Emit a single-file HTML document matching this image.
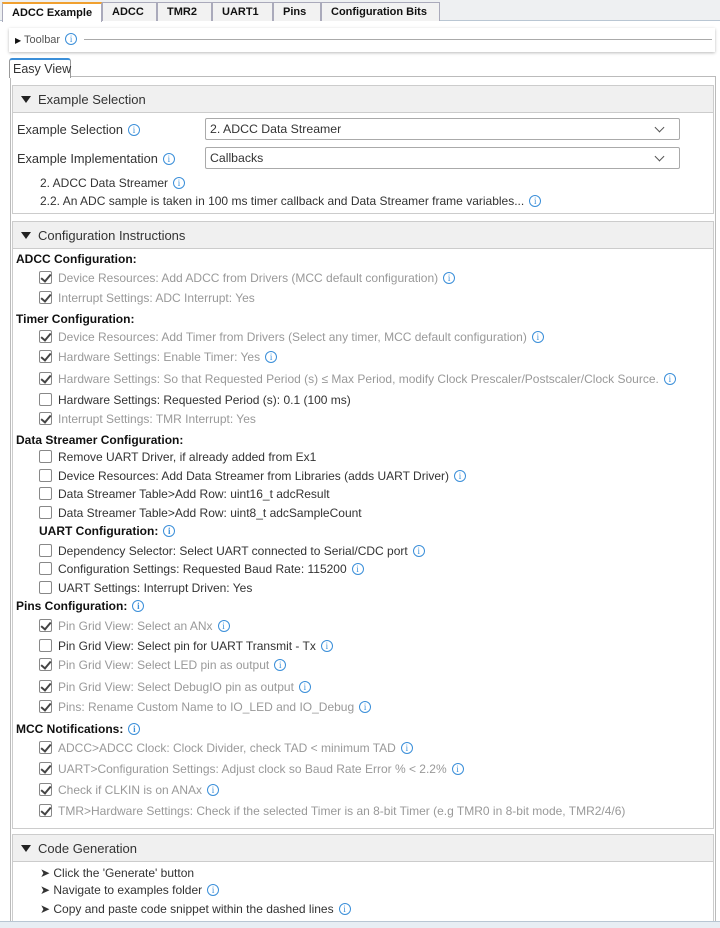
<!DOCTYPE html>
<html><head><meta charset="utf-8"><style>
*{box-sizing:border-box;margin:0;padding:0}
body{width:720px;height:928px;background:#fff;font-family:"Liberation Sans",sans-serif;font-size:12px;color:#333;position:relative;overflow:hidden}
.a{position:absolute;white-space:nowrap}
.tabbar{position:absolute;left:0;top:0;width:720px;height:21px;background:#eef0f2;border-bottom:1px solid #b9c6d3}
.tab{position:absolute;top:2px;height:19px;border:1px solid #aab;border-bottom:none;background:#f2f2f2;font-weight:bold;font-size:11px;line-height:18px;padding-left:9px;color:#111}
.sel{background:#fff;border-top:2px solid #f0a030;height:20px}
.i{display:inline-block;width:12px;height:12px;border:1px solid #3b8fd9;border-radius:50%;color:#3b8fd9;font-size:9px;line-height:10px;text-align:center;font-family:"Liberation Serif",serif;vertical-align:1px;margin-left:5px}
.box{position:absolute;left:12px;width:702px;border:1px solid #ccc;background:#fff}
.hd{position:absolute;left:0;top:0;width:100%;height:27px;background:#f0f0f0;border-bottom:1px solid #ccc;font-size:13px;line-height:27px;padding-left:25px;color:#333}
.hd:before{content:"";position:absolute;left:8px;top:10px;border-left:5px solid transparent;border-right:5px solid transparent;border-top:7px solid #222}
.r{position:absolute;height:16px;line-height:16px;white-space:nowrap;font-size:12px}
.h{font-weight:bold;color:#111}
.g{color:#999}
.d{color:#333}
.cb{display:inline-block;width:13px;height:13px;border:1px solid #888;border-radius:2px;vertical-align:-2px;margin-right:6px;position:relative;background:#fff}
.ck:after{content:"";position:absolute;left:3px;top:0px;width:4px;height:8px;border-right:2px solid #444;border-bottom:2px solid #444;transform:rotate(40deg)}
.dd{position:absolute;left:205px;width:475px;height:22px;border:1px solid #aaa;border-radius:2px;font-size:12.3px;line-height:20px;padding-left:4px;background:#fff}
.dd:after{content:"";position:absolute;right:16px;top:5px;width:6px;height:6px;border-right:1px solid #555;border-bottom:1px solid #555;transform:rotate(45deg)}
</style></head><body>
<div class="tabbar"></div>
<div class="tab sel" style="left:2px;width:100px">ADCC Example <span style="font-size:10px;margin-left:3px">×</span></div>
<div class="tab" style="left:102px;width:55px">ADCC</div>
<div class="tab" style="left:157px;width:55px">TMR2</div>
<div class="tab" style="left:212px;width:61px">UART1</div>
<div class="tab" style="left:273px;width:48px">Pins</div>
<div class="tab" style="left:321px;width:119px">Configuration Bits</div>

<div class="a" style="left:9px;top:28px;width:706px;height:24px;background:#fff;box-shadow:0 1px 3px #bbb"></div>
<div class="a" style="left:15px;top:33px;font-size:11px;color:#555;line-height:14px"><span style="font-size:8px;color:#111">▶</span> Toolbar<span class="i">i</span></div>
<div class="a" style="left:84px;top:39px;width:628px;height:1px;background:#aaa"></div>

<div class="a" style="left:10px;top:76px;width:706px;height:850px;border:1px solid #bbb"></div>
<div class="a" style="left:9px;top:58px;width:62px;height:20px;border:1px solid #999;border-bottom:none;border-top:2px solid #3b8fd9;border-radius:3px 3px 0 0;background:#fff;font-size:12.5px;line-height:18px;padding-left:3px">Easy View</div>

<div class="box" style="top:85px;height:129px">
<div class="hd">Example Selection</div>
<div class="r" style="left:4px;top:36px;font-size:12.8px">Example Selection<span class="i">i</span></div>
<div class="dd" style="left:192px;top:32px">2. ADCC Data Streamer</div>
<div class="r" style="left:4px;top:65px;font-size:12.8px">Example Implementation<span class="i">i</span></div>
<div class="dd" style="left:192px;top:61px">Callbacks</div>
<div class="r" style="left:27px;top:89px">2. ADCC Data Streamer<span class="i">i</span></div>
<div class="r" style="left:27px;top:107px">2.2. An ADC sample is taken in 100 ms timer callback and Data Streamer frame variables...<span class="i">i</span></div>
</div>

<div class="box" style="top:221px;height:608px">
<div class="hd">Configuration Instructions</div>
</div>
<div class="r h" style="left:16px;top:251px">ADCC Configuration:</div>
<div class="r g" style="left:39px;top:270px"><span class="cb ck"></span>Device Resources: Add ADCC from Drivers (MCC default configuration)<span class="i">i</span></div>
<div class="r g" style="left:39px;top:290px"><span class="cb ck"></span>Interrupt Settings: ADC Interrupt: Yes</div>
<div class="r h" style="left:16px;top:311px">Timer Configuration:</div>
<div class="r g" style="left:39px;top:329px"><span class="cb ck"></span>Device Resources: Add Timer from Drivers (Select any timer, MCC default configuration)<span class="i">i</span></div>
<div class="r g" style="left:39px;top:349px"><span class="cb ck"></span>Hardware Settings: Enable Timer: Yes<span class="i">i</span></div>
<div class="r g" style="left:39px;top:371px"><span class="cb ck"></span>Hardware Settings: So that Requested Period (s) ≤ Max Period, modify Clock Prescaler/Postscaler/Clock Source.<span class="i">i</span></div>
<div class="r d" style="left:39px;top:392px"><span class="cb"></span>Hardware Settings: Requested Period (s): 0.1 (100 ms)</div>
<div class="r g" style="left:39px;top:411px"><span class="cb ck"></span>Interrupt Settings: TMR Interrupt: Yes</div>
<div class="r h" style="left:16px;top:432px">Data Streamer Configuration:</div>
<div class="r d" style="left:39px;top:449px"><span class="cb"></span>Remove UART Driver, if already added from Ex1</div>
<div class="r d" style="left:39px;top:468px"><span class="cb"></span>Device Resources: Add Data Streamer from Libraries (adds UART Driver)<span class="i">i</span></div>
<div class="r d" style="left:39px;top:486px"><span class="cb"></span>Data Streamer Table&gt;Add Row: uint16_t adcResult</div>
<div class="r d" style="left:39px;top:505px"><span class="cb"></span>Data Streamer Table&gt;Add Row: uint8_t adcSampleCount</div>
<div class="r h" style="left:39px;top:523px">UART Configuration:<span class="i">i</span></div>
<div class="r d" style="left:39px;top:543px"><span class="cb"></span>Dependency Selector: Select UART connected to Serial/CDC port<span class="i">i</span></div>
<div class="r d" style="left:39px;top:561px"><span class="cb"></span>Configuration Settings: Requested Baud Rate: 115200<span class="i">i</span></div>
<div class="r d" style="left:39px;top:580px"><span class="cb"></span>UART Settings: Interrupt Driven: Yes</div>
<div class="r h" style="left:16px;top:598px">Pins Configuration:<span class="i">i</span></div>
<div class="r g" style="left:39px;top:618px"><span class="cb ck"></span>Pin Grid View: Select an ANx<span class="i">i</span></div>
<div class="r d" style="left:39px;top:638px"><span class="cb"></span>Pin Grid View: Select pin for UART Transmit - Tx<span class="i">i</span></div>
<div class="r g" style="left:39px;top:657px"><span class="cb ck"></span>Pin Grid View: Select LED pin as output<span class="i">i</span></div>
<div class="r g" style="left:39px;top:679px"><span class="cb ck"></span>Pin Grid View: Select DebugIO pin as output<span class="i">i</span></div>
<div class="r g" style="left:39px;top:699px"><span class="cb ck"></span>Pins: Rename Custom Name to IO_LED and IO_Debug<span class="i">i</span></div>
<div class="r h" style="left:16px;top:721px">MCC Notifications:<span class="i">i</span></div>
<div class="r g" style="left:39px;top:740px"><span class="cb ck"></span>ADCC&gt;ADCC Clock: Clock Divider, check TAD &lt; minimum TAD<span class="i">i</span></div>
<div class="r g" style="left:39px;top:761px"><span class="cb ck"></span>UART&gt;Configuration Settings: Adjust clock so Baud Rate Error % &lt; 2.2%<span class="i">i</span></div>
<div class="r g" style="left:39px;top:782px"><span class="cb ck"></span>Check if CLKIN is on ANAx<span class="i">i</span></div>
<div class="r g" style="left:39px;top:803px"><span class="cb ck"></span>TMR&gt;Hardware Settings: Check if the selected Timer is an 8-bit Timer (e.g TMR0 in 8-bit mode, TMR2/4/6)</div>

<div class="box" style="top:834px;height:94px">
<div class="hd">Code Generation</div>
</div>
<div class="r d" style="left:40px;top:865px">➤ Click the 'Generate' button</div>
<div class="r d" style="left:40px;top:882px">➤ Navigate to examples folder<span class="i">i</span></div>
<div class="r d" style="left:40px;top:901px">➤ Copy and paste code snippet within the dashed lines<span class="i">i</span></div>
<div class="a" style="left:0;top:921px;width:720px;height:7px;background:#e8eef4;border-top:1px solid #b9c6d3"></div>
</body></html>
